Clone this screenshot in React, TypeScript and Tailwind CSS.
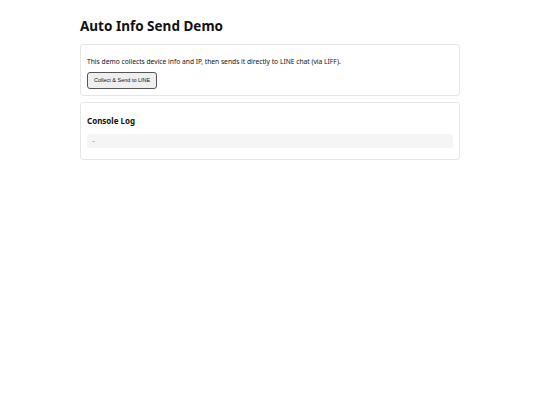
import React from "react";

export default function App() {
  return (
    <div className="min-h-screen bg-white" style={{ fontFamily: '"Noto Sans", sans-serif' }}>
      <div className="w-[380px] ml-[80px] pt-[17px]">
        <h1 className="text-[13.5px] font-bold text-[#111] leading-[18px] mb-[9px]">Auto Info Send Demo</h1>
        <div className="flex flex-col items-start border border-[#e6e6e6] rounded-[3px] px-[6px] pt-[12px] pb-[6px]">
          <p className="text-[6.7px] leading-[10px] text-[#111] mb-[5px]">
            This demo collects device info and IP, then sends it directly to LINE chat (via LIFF).
          </p>
          <button className="h-[17px] px-[6px] bg-[#efefef] border border-[#555] rounded-[3px] text-[5.5px] leading-none text-[#111]" style={{ fontFamily: '"Liberation Sans", Arial, sans-serif' }}>
            Collect &amp; Send to LINE
          </button>
        </div>
        <div className="mt-[6px] border border-[#e6e6e6] rounded-[3px] px-[6px] pt-[12px] pb-[11px]">
          <h3 className="text-[8px] font-bold text-[#111] leading-[12px] mb-[7px]">Console Log</h3>
          <div className="bg-[#f5f5f5] rounded-[2px] h-[14px] px-[5px] flex items-center text-[6px] text-[#777]">–</div>
        </div>
      </div>
    </div>
  );
}
